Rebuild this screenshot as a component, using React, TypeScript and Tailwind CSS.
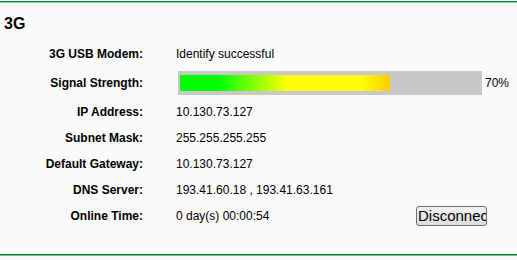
import React from 'react';

type Row = { label: string; value: React.ReactNode; tall?: boolean };

const SignalBar = ({ percent }: { percent: number }) => (
  <div className="flex items-center">
    <div className="ml-[2px] w-[304px] h-[24px] bg-[#c8c8c8] pl-[2px] pt-[4px]">
      <div
        className="h-[16px] bg-[linear-gradient(to_right,#00ff00_0%,#00ff00_18%,#ffff00_51%,#ffff00_86%,#ffcc00_100%)]"
        style={{ width: `${percent * 3}px` }}
      />
    </div>
    <span className="ml-[3px]">{percent}%</span>
  </div>
);

export default function App() {
  const rows: Row[] = [
    { label: '3G USB Modem:', value: 'Identify successful' },
    { label: 'Signal Strength:', value: <SignalBar percent={70} />, tall: true },
    { label: 'IP Address:', value: '10.130.73.127' },
    { label: 'Subnet Mask:', value: '255.255.255.255' },
    { label: 'Default Gateway:', value: '10.130.73.127' },
    { label: 'DNS Server:', value: '193.41.60.18 , 193.41.63.161' },
    {
      label: 'Online Time:',
      value: (
        <div className="flex items-center">
          <span className="w-[240px]">0 day(s) 00:00:54</span>
          <button className="w-[71px] h-[20px] overflow-hidden whitespace-nowrap text-left pl-px text-[15px] leading-[18px] text-black border border-[#707070] rounded-[3px] bg-[linear-gradient(#f2f2f2,#dedede)]">
            Disconnect
          </button>
        </div>
      ),
    },
  ];

  return (
    <div className="w-[517px] h-[260px] bg-[#fafafa] font-['Liberation_Sans',Arial,sans-serif] text-black flex flex-col">
      <div className="h-px bg-[#fafafa]" />
      <div className="h-px bg-[#0b8034]" />
      <div className="h-px bg-[#8fd0a8]" />

      <h2 className="mt-[11px] ml-[4px] text-[16px] leading-[20px] font-bold">3G</h2>

      <div className="mt-[7px] flex flex-col text-[12px]">
        {rows.map((r) => (
          <div key={r.label} className={`flex items-center ${r.tall ? 'h-[32px]' : 'h-[26px]'}`}>
            <div className="w-[143px] text-right font-bold">{r.label}</div>
            <div className="ml-[33px] flex-1">{r.value}</div>
          </div>
        ))}
      </div>

      <div className="mt-auto mb-[4px]">
        <div className="h-px bg-[#0b7a30]" />
        <div className="h-px bg-[#6fbf8e]" />
      </div>
    </div>
  );
}
